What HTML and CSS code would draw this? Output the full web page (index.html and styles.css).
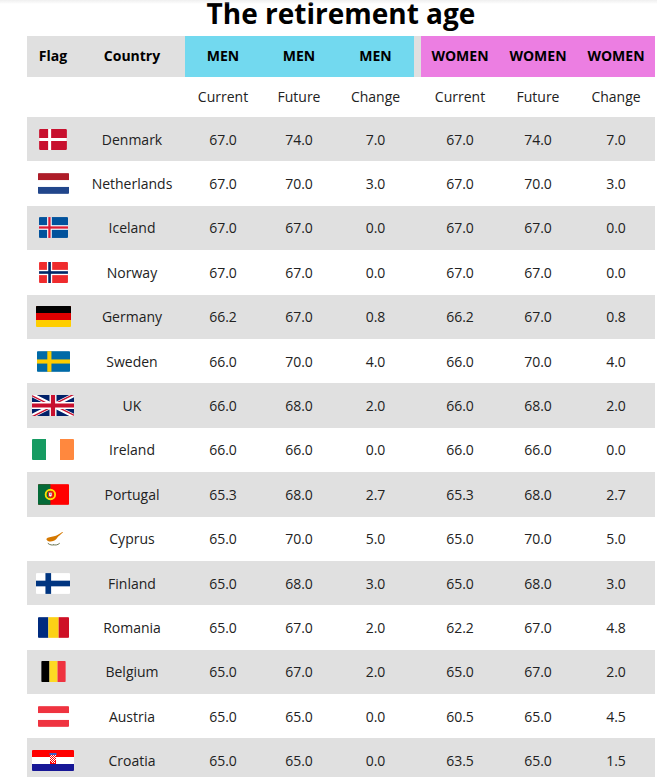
FILE: index.html
```html
<!DOCTYPE html>
<html lang="en">
<head>
<meta charset="utf-8">
<title>The retirement age</title>
<link rel="stylesheet" href="styles.css">
</head>
<body>
<div class="topshade"></div>
<main class="page">
  <h1 class="title">The retirement age</h1>
  <table class="ages">
    <colgroup>
      <col class="c-flag"><col class="c-country">
      <col class="c-men"><col class="c-men"><col class="c-men3">
      <col class="c-gap">
      <col class="c-women"><col class="c-women"><col class="c-women">
    </colgroup>
    <thead>
      <tr class="head">
        <th>Flag</th><th>Country</th>
        <th class="men">MEN</th><th class="men">MEN</th><th class="men">MEN</th>
        <th class="gap"></th>
        <th class="women">WOMEN</th><th class="women">WOMEN</th><th class="women">WOMEN</th>
      </tr>
      <tr class="sub">
        <th></th><th></th>
        <th>Current</th><th>Future</th><th>Change</th>
        <th class="gap"></th>
        <th>Current</th><th>Future</th><th>Change</th>
      </tr>
    </thead>
    <tbody>
      <tr>
        <td><svg class="flag" width="28" height="21" viewBox="0 0 37 28"><rect width="37" height="28" rx="1" fill="#c8102e"/><rect x="12" width="4" height="28" fill="#fff"/><rect y="12" width="37" height="4" fill="#fff"/></svg></td>
        <td>Denmark</td><td>67.0</td><td>74.0</td><td>7.0</td><td class="gap"></td><td>67.0</td><td>74.0</td><td>7.0</td>
      </tr>
      <tr>
        <td><svg class="flag" width="31" height="21" viewBox="0 0 9 6"><rect width="9" height="6" fill="#21468b"/><rect width="9" height="4" fill="#fff"/><rect width="9" height="2" fill="#ae1c28"/></svg></td>
        <td>Netherlands</td><td>67.0</td><td>70.0</td><td>3.0</td><td class="gap"></td><td>67.0</td><td>70.0</td><td>3.0</td>
      </tr>
      <tr>
        <td><svg class="flag" width="29" height="21" viewBox="0 0 25 18"><rect width="25" height="18" fill="#02529c"/><rect x="7" width="4" height="18" fill="#fff"/><rect y="7" width="25" height="4" fill="#fff"/><rect x="8" width="2" height="18" fill="#dc1e35"/><rect y="8" width="25" height="2" fill="#dc1e35"/></svg></td>
        <td>Iceland</td><td>67.0</td><td>67.0</td><td>0.0</td><td class="gap"></td><td>67.0</td><td>67.0</td><td>0.0</td>
      </tr>
      <tr>
        <td><svg class="flag" width="29" height="21" viewBox="0 0 22 16"><rect width="22" height="16" fill="#ef2b2d"/><rect x="6" width="4" height="16" fill="#fff"/><rect y="6" width="22" height="4" fill="#fff"/><rect x="7" width="2" height="16" fill="#002868"/><rect y="7" width="22" height="2" fill="#002868"/></svg></td>
        <td>Norway</td><td>67.0</td><td>67.0</td><td>0.0</td><td class="gap"></td><td>67.0</td><td>67.0</td><td>0.0</td>
      </tr>
      <tr>
        <td><svg class="flag" width="35" height="21" viewBox="0 0 5 3"><rect width="5" height="3" fill="#ffce00"/><rect width="5" height="2" fill="#dd0000"/><rect width="5" height="1" fill="#000"/></svg></td>
        <td>Germany</td><td>66.2</td><td>67.0</td><td>0.8</td><td class="gap"></td><td>66.2</td><td>67.0</td><td>0.8</td>
      </tr>
      <tr>
        <td><svg class="flag" width="33" height="21" viewBox="0 0 16 10"><rect width="16" height="10" fill="#006aa7"/><rect x="5" width="2" height="10" fill="#fecc00"/><rect y="4" width="16" height="2" fill="#fecc00"/></svg></td>
        <td>Sweden</td><td>66.0</td><td>70.0</td><td>4.0</td><td class="gap"></td><td>66.0</td><td>70.0</td><td>4.0</td>
      </tr>
      <tr>
        <td><svg class="flag" width="42" height="21" viewBox="0 0 60 30"><defs><clipPath id="ukt"><path d="M30,15 h30 v15 z v15 h-30 z h-30 v-15 z v-15 h30 z"/></clipPath><clipPath id="ukf"><rect width="60" height="30"/></clipPath></defs><g clip-path="url(#ukf)"><rect width="60" height="30" fill="#012169"/><path d="M0,0 L60,30 M60,0 L0,30" stroke="#fff" stroke-width="6"/><path d="M0,0 L60,30 M60,0 L0,30" clip-path="url(#ukt)" stroke="#c8102e" stroke-width="4"/><path d="M30,0 v30 M0,15 h60" stroke="#fff" stroke-width="10"/><path d="M30,0 v30 M0,15 h60" stroke="#c8102e" stroke-width="6"/></g></svg></td>
        <td>UK</td><td>66.0</td><td>68.0</td><td>2.0</td><td class="gap"></td><td>66.0</td><td>68.0</td><td>2.0</td>
      </tr>
      <tr>
        <td><svg class="flag" width="42" height="21" viewBox="0 0 6 3"><rect width="6" height="3" fill="#fff"/><rect width="2" height="3" fill="#169b62"/><rect x="4" width="2" height="3" fill="#ff883e"/></svg></td>
        <td>Ireland</td><td>66.0</td><td>66.0</td><td>0.0</td><td class="gap"></td><td>66.0</td><td>66.0</td><td>0.0</td>
      </tr>
      <tr>
        <td><svg class="flag" width="31" height="21" viewBox="0 0 30 20"><rect width="30" height="20" fill="#ff0000"/><rect width="12" height="20" fill="#046a38"/><circle cx="12" cy="10" r="4.6" fill="none" stroke="#ffe000" stroke-width="1.8"/><path d="M9.6,7.2 h4.8 v3.8 a2.4,2.4 0 0 1 -4.8,0 z" fill="#da291c"/><path d="M10.8,8.3 h2.4 v2.5 a1.2,1.2 0 0 1 -2.4,0 z" fill="#fff"/><circle cx="12" cy="9.6" r="0.5" fill="#002f9e"/></svg></td>
        <td>Portugal</td><td>65.3</td><td>68.0</td><td>2.7</td><td class="gap"></td><td>65.3</td><td>68.0</td><td>2.7</td>
      </tr>
      <tr>
        <td><svg class="flag" width="31" height="21" viewBox="0 0 30 20"><rect width="30" height="20" fill="#fff"/><path d="M8,10.4 C9.5,8.6 12.5,8.4 15.5,7.8 C18,7.3 20.5,5.4 23.5,3.6 L24.2,4.2 C22,6 20,7.6 18.8,9 C17.6,11 15.6,12.6 12.4,12.9 C10.4,13 8.8,12.2 8,10.4 Z" fill="#d57800"/><path d="M9.5,14.6 C11.5,16.4 14,16.6 15.5,16" fill="none" stroke="#4e5b31" stroke-width="0.8"/><path d="M21,14.6 C19,16.4 16.5,16.6 15,16" fill="none" stroke="#4e5b31" stroke-width="0.8"/></svg></td>
        <td>Cyprus</td><td>65.0</td><td>70.0</td><td>5.0</td><td class="gap"></td><td>65.0</td><td>70.0</td><td>5.0</td>
      </tr>
      <tr>
        <td><svg class="flag" width="34" height="21" viewBox="0 0 18 11"><rect width="18" height="11" fill="#fff"/><rect x="5" width="3" height="11" fill="#003580"/><rect y="4" width="18" height="3" fill="#003580"/></svg></td>
        <td>Finland</td><td>65.0</td><td>68.0</td><td>3.0</td><td class="gap"></td><td>65.0</td><td>68.0</td><td>3.0</td>
      </tr>
      <tr>
        <td><svg class="flag" width="31" height="21" viewBox="0 0 3 2"><rect width="1" height="2" fill="#002b7f"/><rect x="1" width="1" height="2" fill="#fcd116"/><rect x="2" width="1" height="2" fill="#ce1126"/></svg></td>
        <td>Romania</td><td>65.0</td><td>67.0</td><td>2.0</td><td class="gap"></td><td>62.2</td><td>67.0</td><td>4.8</td>
      </tr>
      <tr>
        <td><svg class="flag" width="25" height="21" viewBox="0 0 15 13"><rect width="5" height="13" fill="#000"/><rect x="5" width="5" height="13" fill="#fdda24"/><rect x="10" width="5" height="13" fill="#ef3340"/></svg></td>
        <td>Belgium</td><td>65.0</td><td>67.0</td><td>2.0</td><td class="gap"></td><td>65.0</td><td>67.0</td><td>2.0</td>
      </tr>
      <tr>
        <td><svg class="flag" width="31" height="21" viewBox="0 0 3 2"><rect width="3" height="2" fill="#ef3340"/><rect y="0.6667" width="3" height="0.6667" fill="#fff"/></svg></td>
        <td>Austria</td><td>65.0</td><td>65.0</td><td>0.0</td><td class="gap"></td><td>60.5</td><td>65.0</td><td>4.5</td>
      </tr>
      <tr>
        <td><svg class="flag" width="42" height="21" viewBox="0 0 42 21"><rect width="42" height="21" fill="#171796"/><rect width="42" height="14" fill="#fff"/><rect width="42" height="7" fill="#ff0000"/><rect x="17.5" y="3" width="7" height="2" fill="#3b5ec4"/><g fill="#ff0000"><rect x="18" y="5" width="6" height="9" rx="0.5"/></g><g fill="#fff"><rect x="19" y="5" width="1" height="1"/><rect x="21" y="5" width="1" height="1"/><rect x="23" y="5" width="1" height="1"/><rect x="18" y="6" width="1" height="1"/><rect x="20" y="6" width="1" height="1"/><rect x="22" y="6" width="1" height="1"/><rect x="19" y="7" width="1" height="1"/><rect x="21" y="7" width="1" height="1"/><rect x="23" y="7" width="1" height="1"/><rect x="18" y="8" width="1" height="1"/><rect x="20" y="8" width="1" height="1"/><rect x="22" y="8" width="1" height="1"/><rect x="19" y="9" width="1" height="1"/><rect x="21" y="9" width="1" height="1"/><rect x="23" y="9" width="1" height="1"/><rect x="18" y="10" width="1" height="1"/><rect x="20" y="10" width="1" height="1"/><rect x="22" y="10" width="1" height="1"/><rect x="19" y="11" width="1" height="1"/><rect x="21" y="11" width="1" height="1"/><rect x="20" y="12" width="1" height="1"/><rect x="22" y="12" width="1" height="1"/></g></svg></td>
        <td>Croatia</td><td>65.0</td><td>65.0</td><td>0.0</td><td class="gap"></td><td>63.5</td><td>65.0</td><td>1.5</td>
      </tr>
    </tbody>
  </table>
</main>
</body>
</html>
```

FILE: styles.css
```css
html, body {
  margin: 0;
  padding: 0;
  background: #fff;
}

body {
  font-family: "Open Sans", "Liberation Sans", sans-serif;
  color: #222;
}

.topshade {
  position: fixed;
  top: 0;
  left: 0;
  right: 0;
  height: 4px;
  background: linear-gradient(#efefef, rgba(255, 255, 255, 0));
  z-index: 5;
}

.page {
  padding-left: 27px;
  width: 628px;
}

.title {
  margin: 0;
  font-size: 28px;
  line-height: 26px;
  font-weight: 700;
  text-align: center;
  color: #000;
}

.ages {
  margin-top: 10px;
  width: 628px;
  border-collapse: collapse;
  table-layout: fixed;
  font-size: 14px;
}

.c-flag { width: 52px; }
.c-country { width: 106px; }
.c-men { width: 76px; }
.c-men3 { width: 77px; }
.c-gap { width: 7px; }
.c-women { width: 78px; }

.ages th,
.ages td {
  padding: 0;
  text-align: center;
  vertical-align: middle;
}

.head {
  height: 40.5px;
  background: #e0e0e0;
}

.head th {
  font-weight: 700;
  color: #000;
  padding-bottom: 1px;
}

.head .men { background: #72d9ef; }
.head .women { background: #ec7ee2; }
.head .gap { background: #e0e0e0; }

.sub {
  height: 40.5px;
  background: #fff;
}

.sub th {
  font-weight: 400;
  color: #222;
}

.ages tbody tr {
  height: 44.4px;
}

.ages tbody tr:nth-child(odd) {
  background: #e0e0e0;
}

.flag {
  display: block;
  margin: 0 auto;
  border-radius: 1px;
}
```
